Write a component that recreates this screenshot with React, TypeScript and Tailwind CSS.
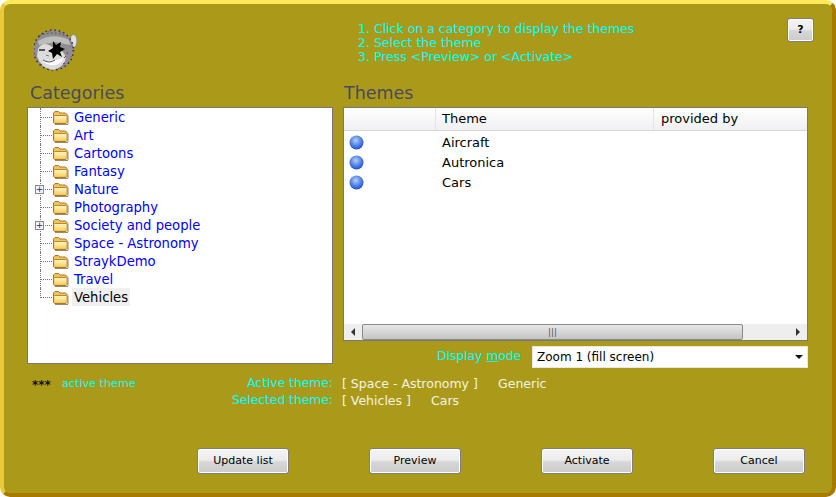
const categories = [
  { name: "Generic" },
  { name: "Art" },
  { name: "Cartoons" },
  { name: "Fantasy" },
  { name: "Nature", expandable: true },
  { name: "Photography" },
  { name: "Society and people", expandable: true },
  { name: "Space - Astronomy" },
  { name: "StraykDemo" },
  { name: "Travel" },
  { name: "Vehicles", selected: true },
];

const themes = ["Aircraft", "Autronica", "Cars"];

const FolderIcon = () => (
  <svg width="17" height="15" viewBox="0 0 17 15" className="shrink-0">
    <defs>
      <linearGradient id="folderFill" x1="0" y1="0" x2="0" y2="1">
        <stop offset="0" stopColor="#fff6c4" />
        <stop offset="1" stopColor="#f8cf62" />
      </linearGradient>
    </defs>
    <path d="M1.5 12.5V3L3 1.5h3.5L8 3h5.5L15 4.5v8l-1 1H2.5z" fill="#f0c25a" stroke="#a8782a" />
    <path d="M2.5 6h12v6.5h-12z" fill="url(#folderFill)" />
    <path d="M2.5 5.5h12" stroke="#b98a30" />
    <path d="M3 14.5h13M16 5.5V14" stroke="#7a6235" strokeOpacity="0.75" />
  </svg>
);

const Ball = () => (
  <svg width="15" height="15" viewBox="0 0 15 15">
    <defs>
      <radialGradient id="ball" cx="0.45" cy="0.35" r="0.65">
        <stop offset="0" stopColor="#b9cdf5" />
        <stop offset="0.5" stopColor="#5f8de8" />
        <stop offset="1" stopColor="#1d50d8" />
      </radialGradient>
    </defs>
    <circle cx="7.5" cy="7.5" r="7" fill="url(#ball)" />
  </svg>
);

// monkey mascot with the black star over one eye
const Monkey = () => (
  <svg width="46" height="46" viewBox="0 0 46 46">
    <ellipse cx="39.5" cy="13" rx="3.5" ry="6.5" fill="#e0e0e0" stroke="#8a8a8a" />
    <circle cx="19.5" cy="22" r="20" fill="#8f8f8f" />
    <circle cx="19.5" cy="22" r="20" fill="none" stroke="#333" strokeWidth="1.5" strokeDasharray="1.5 3" />
    <circle cx="19.5" cy="22" r="19" fill="none" stroke="#8a2a9a" strokeWidth="1" strokeDasharray="1 5" />
    <path d="M4 13q15-9 31-1l1 5-15-3-16 3z" fill="#bdbdbd" />
    <path d="M5 8q14-6 27 0" fill="none" stroke="#555" strokeDasharray="2 2" />
    <path d="M4 21q4-7 11-4l6 4 8 3 3 5q-1 10-13 13Q6 40 3 28z" fill="#dcdcdc" />
    <path d="M8 33q6 5 13 4 6-1 9-7-11 4-22 3z" fill="#ffffff" />
    <path d="M9 32q6 4 12 0" fill="none" stroke="#555" />
    <path d="M5 22h6" stroke="#555" strokeWidth="2" />
    <path d="M12 27l3 1" stroke="#777" />
    <path d="M19 13l3 4 5-3-1 5 5 2-5 3 2 5-5-3-4 5-1-6-4-2 5-3z" fill="#000" />
    <path d="M30 30l2-2M33 24l1 2M29 36l2-1M6 36l2 1" stroke="#7a2a8a" />
  </svg>
);

const TreeRow = ({ name, expandable, selected, last }: { name: string; expandable?: boolean; selected?: boolean; last?: boolean }) => (
  <div className="flex h-[18px] items-center pl-[12px]">
    <div className="relative h-full w-[12px] shrink-0">
      <div className={`absolute left-0 top-0 border-l border-dotted border-[#777] ${last ? "h-[10px]" : "h-full"}`} />
      <div className="absolute left-0 top-[9px] w-full border-t border-dotted border-[#777]" />
      {expandable && (
        <div className="absolute left-[-5px] top-[5px] flex h-[9px] w-[9px] items-center justify-center border border-[#8a8a8a] bg-[#f4f4f0] text-[9px] leading-none text-[#203080]">
          +
        </div>
      )}
    </div>
    <FolderIcon />
    <span className={`ml-[3px] px-[2px] text-[13.2px] leading-[18px] ${selected ? "bg-[#f0f0f0] text-black" : "text-[#0000ff]"}`}>
      <span className="relative top-[1px]">{name}</span>
    </span>
  </div>
);

const Btn = ({ label, className }: { label: string; className?: string }) => (
  <button className={`flex items-center justify-center rounded-[3px] border border-[#7f7f7f] bg-[linear-gradient(#f4f4f4_0%,#ececec_45%,#d6d6d6_55%,#cccccc_100%)] text-[11px] text-black shadow-[inset_0_0_0_1px_#ffffff] ${className ?? "h-[26px] w-[92px]"}`}>
    {label}
  </button>
);

const Arrow = ({ dir }: { dir: "left" | "right" | "down" }) => (
  <svg width="8" height="8" viewBox="0 0 8 8" className="shrink-0">
    {dir === "left" && <path d="M6 0v8L2 4z" fill="#333" />}
    {dir === "right" && <path d="M2 0v8l4-4z" fill="#333" />}
    {dir === "down" && <path d="M0 2h8L4 6z" fill="#111" />}
  </svg>
);

export default function App() {
  return (
    <div className="h-[497px] w-[836px] bg-white font-['DejaVu_Sans',sans-serif]">
      <div className="h-full w-full rounded-[10px] border-b-[4px] border-l-[4px] border-r-[4px] border-t-[4px] border-b-[#a87a00] border-l-[#eac93a] border-r-[#a87a00] border-t-[#ffe95a] bg-[#ab9a1a] pl-[23px] pr-[24px]">
        {/* header */}
        <div className="flex h-[80px]">
          <div className="w-[331px] shrink-0 pl-[7px] pt-[24px]">
            <Monkey />
          </div>
          <div className="pt-[18px] text-[12.5px] leading-[14px] text-[#00ffff]">
            <div>1. Click on a category to display the themes</div>
            <div>2. Select the theme</div>
            <div>3. Press &lt;Preview&gt; or &lt;Activate&gt;</div>
          </div>
          <div className="ml-auto mr-[-6px] pt-[14px]">
            <Btn label="?" className="h-[24px] w-[27px] font-bold" />
          </div>
        </div>

        {/* lists */}
        <div className="flex">
          <div className="w-[306px] shrink-0">
            <h2 className="pb-[4px] pl-[3px] text-[17.5px] leading-[19px] text-[#4a4a5c]">Categories</h2>
            <div className="h-[257px] border border-[#777] bg-white">
              {categories.map((c, i) => (
                <TreeRow key={c.name} name={c.name} expandable={c.expandable} selected={c.selected} last={i === categories.length - 1} />
              ))}
            </div>
          </div>

          <div className="ml-[10px] w-[465px]">
            <h2 className="pb-[4px] pl-[1px] text-[17.5px] leading-[19px] text-[#4a4a5c]">Themes</h2>
            <div className="flex h-[234px] flex-col border border-[#777] bg-white">
              <div className="flex h-[23px] shrink-0 border-b border-[#d8d8d8] bg-[linear-gradient(#ffffff,#f0f0f3)] text-[13px] leading-[22px] text-black">
                <div className="w-[92px] border-r border-[#e4e4e4]" />
                <div className="w-[218px] border-r border-[#e4e4e4] pl-[6px]">Theme</div>
                <div className="pl-[7px]">provided by</div>
              </div>
              <div className="flex-1 pt-[2px]">
                {themes.map((t) => (
                  <div key={t} className="flex h-[20px] items-center text-[13px] text-black">
                    <div className="mt-[-2px] flex w-[98px] pl-[5px]">
                      <Ball />
                    </div>
                    <span>{t}</span>
                  </div>
                ))}
              </div>
              <div className="flex h-[16px] shrink-0 items-center bg-[#eeeeee]">
                <div className="flex w-[18px] justify-center">
                  <Arrow dir="left" />
                </div>
                <div className="flex h-full w-[381px] items-center justify-center rounded-[2px] border border-[#8a8a8a] bg-[linear-gradient(#e8e8e8,#c4c4c4)] text-[9px] leading-none text-[#555]">
                  |||
                </div>
                <div className="ml-auto flex w-[18px] justify-center">
                  <Arrow dir="right" />
                </div>
              </div>
            </div>

            <div className="mt-[5px] flex h-[21px] items-center">
              <label className="ml-[94px] w-[95px] text-[12.3px] text-[#00ffff]">
                Display <span className="underline">m</span>ode
              </label>
              <div className="flex h-[22px] flex-1 items-center justify-between border border-[#e8e8e0] bg-white pl-[4px] pr-[4px] text-[12px] text-black">
                <span>Zoom 1 (fill screen)</span>
                <Arrow dir="down" />
              </div>
            </div>
          </div>
        </div>

        {/* status */}
        <div className="mt-[8px] flex text-[11.2px] leading-[17px]">
          <div className="flex h-[17px] w-[306px] shrink-0 items-center">
            <div className="relative flex-1 pl-[35px] text-[#00ffff]">
              <span className="absolute left-[5px] top-[2px] text-[12px] font-bold text-[#111]">***</span>
              active theme
            </div>
            <div className="text-right text-[12.3px] text-[#00ffff]">Active theme:</div>
          </div>
          <div className="ml-[9px] flex h-[17px] text-[12.5px] text-[#f4f4e0]">
            <span className="w-[156px]">[ Space - Astronomy ]</span>
            <span>Generic</span>
          </div>
        </div>
        <div className="flex text-[12.3px] leading-[17px]">
          <div className="w-[306px] shrink-0 text-right text-[#00ffff]">Selected theme:</div>
          <div className="ml-[9px] flex text-[12.5px] text-[#f4f4e0]">
            <span className="w-[89px]">[ Vehicles ]</span>
            <span>Cars</span>
          </div>
        </div>

        {/* buttons */}
        <div className="ml-[170px] mt-[39px] flex w-[608px] justify-between">
          <Btn label="Update list" />
          <Btn label="Preview" />
          <Btn label="Activate" />
          <Btn label="Cancel" />
        </div>
      </div>
    </div>
  );
}
